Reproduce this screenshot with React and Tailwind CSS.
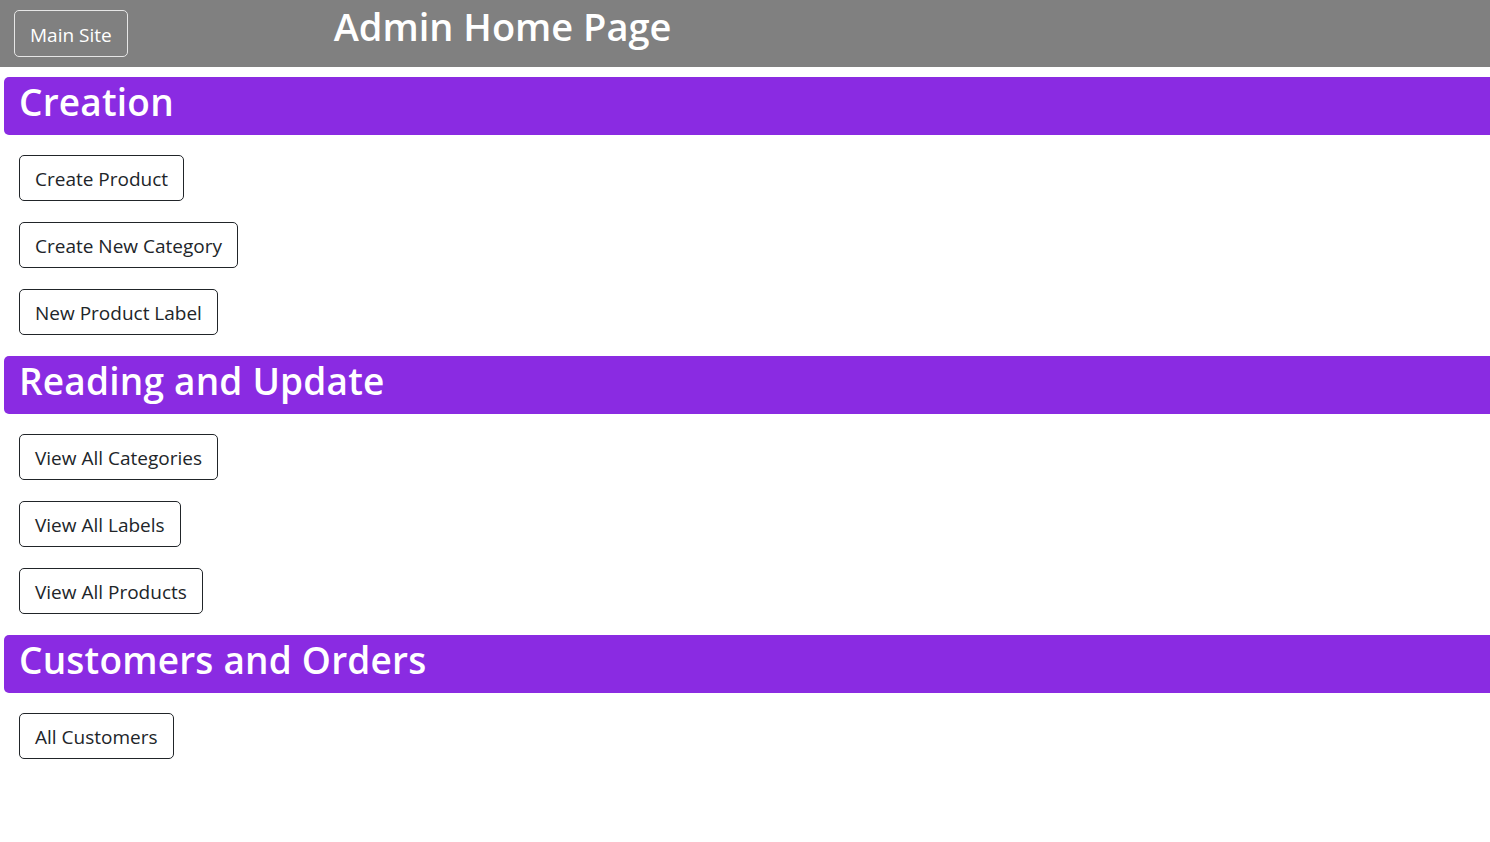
export default function App() {
  const sections = [
    { title: "Creation", items: ["Create Product", "Create New Category", "New Product Label"] },
    { title: "Reading and Update", items: ["View All Categories", "View All Labels", "View All Products"] },
    { title: "Customers and Orders", items: ["All Customers"] },
  ];
  return (
    <div className="min-h-[842px] bg-white text-[#212529]" style={{ fontFamily: '"Open Sans", "Noto Sans", sans-serif' }}>
      <header className="flex h-[67px] items-start bg-[#808080]">
        <button className="ml-[14px] mt-[10px] h-[47px] rounded-[5px] border border-[#e6e6e6] px-[15px] pt-[3px] text-[19px] leading-none text-white">
          Main Site
        </button>
        <h1 className="ml-[206px] mt-[2px] text-[38px] font-semibold leading-[48px] text-white">Admin Home Page</h1>
      </header>
      <main className="flex flex-col gap-[21px] pl-[4px] pt-[10px]">
        {sections.map((s) => (
          <section key={s.title} className="flex flex-col gap-[20px]">
            <h2 className="flex h-[58px] items-center rounded-l-[5px] bg-[#8a2be2] pb-[8px] pl-[15px] text-[37px] font-semibold tracking-[0.2px] text-white">
              {s.title}
            </h2>
            <div className="flex flex-col items-start gap-[21px] pl-[15px]">
              {s.items.map((it) => (
                <button key={it} className="h-[46px] rounded-[5px] border border-[#212529] bg-white px-[15px] pt-[3px] text-[19px] leading-none text-[#212529]">
                  {it}
                </button>
              ))}
            </div>
          </section>
        ))}
      </main>
    </div>
  );
}
